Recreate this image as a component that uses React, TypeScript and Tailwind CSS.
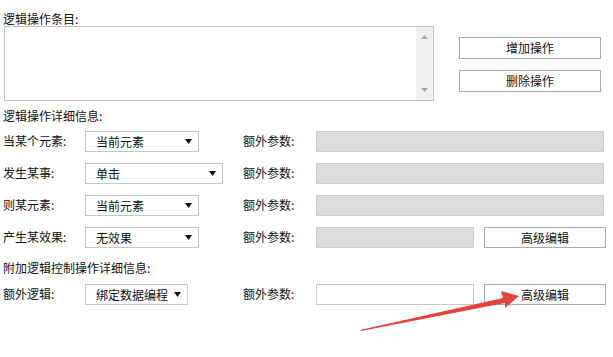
import React from "react";

const font = { fontFamily: '"Noto Sans CJK SC", "Liberation Sans", sans-serif' };

function Select({ value, width }: { value: string; width: string }) {
  return (
    <div className={`flex items-center justify-between h-[21px] border border-[#c6c6c6] bg-white pl-[10px] pr-[6px] ${width}`}>
      <span className="text-[12px] leading-none">{value}</span>
      <svg width="7" height="5" viewBox="0 0 7 5">
        <path d="M0 0 L7 0 L3.5 5 Z" fill="#111" />
      </svg>
    </div>
  );
}

function Button({ label, className = "" }: { label: string; className?: string }) {
  return (
    <div className={`flex items-center justify-center h-[21px] border border-[#a9a9a9] bg-white text-[12px] leading-none ${className}`}>
      {label}
    </div>
  );
}

function Row({
  label,
  value,
  selectWidth,
  extra,
}: {
  label: string;
  value: string;
  selectWidth: string;
  extra: React.ReactNode;
}) {
  return (
    <div className="flex items-center h-[21px]">
      <span className="w-[82px] text-[12px] leading-none -mt-[2px]">{label}</span>
      <div className="w-[158px]">
        <Select value={value} width={selectWidth} />
      </div>
      <span className="w-[73px] text-[12px] leading-none -mt-[2px]">额外参数:</span>
      {extra}
    </div>
  );
}

export default function App() {
  const grayFull = <div className="w-[288px] h-[21px] bg-[#dcdcdc] border border-[#cdcdcd]" />;

  return (
    <div className="relative w-[613px] h-[357px] bg-white text-[#111] overflow-hidden" style={font}>
      <div className="pl-[3px] pt-[12px]">
        <p className="text-[12px] leading-[14px]">逻辑操作条目:</p>

        {/* list + buttons */}
        <div className="flex mt-[0px]">
          <div className="flex ml-[1px] w-[430px] h-[75px] border border-[#c3c3c3] bg-white">
            <div className="flex-1" />
            <div className="w-[17px] bg-[#f0f0f0] flex flex-col items-center justify-between py-[8px]">
              <svg width="7" height="4" viewBox="0 0 7 4">
                <path d="M0 4 L7 4 L3.5 0 Z" fill="#a6a6a6" />
              </svg>
              <svg width="7" height="4" viewBox="0 0 7 4">
                <path d="M0 0 L7 0 L3.5 4 Z" fill="#a6a6a6" />
              </svg>
            </div>
          </div>
          <div className="flex flex-col gap-[11px] ml-[25px] pt-[11px]">
            <Button label="增加操作" className="w-[142px] h-[22px]" />
            <Button label="删除操作" className="w-[142px] h-[22px]" />
          </div>
        </div>

        <p className="text-[12px] leading-[14px] mt-[8px]">逻辑操作详细信息:</p>

        <div className="flex flex-col gap-[11px] mt-[8px]">
          <Row label="当某个元素:" value="当前元素" selectWidth="w-[114px]" extra={grayFull} />
          <Row label="发生某事:" value="单击" selectWidth="w-[138px]" extra={grayFull} />
          <Row label="则某元素:" value="当前元素" selectWidth="w-[114px]" extra={grayFull} />
          <Row
            label="产生某效果:"
            value="无效果"
            selectWidth="w-[114px]"
            extra={
              <div className="flex gap-[10px]">
                <div className="w-[158px] h-[21px] bg-[#dcdcdc] border border-[#cdcdcd]" />
                <Button label="高级编辑" className="w-[122px]" />
              </div>
            }
          />
        </div>

        <p className="text-[12px] leading-[14px] mt-[13px]">附加逻辑控制操作详细信息:</p>

        <div className="mt-[9px]">
          <Row
            label="额外逻辑:"
            value="绑定数据编程"
            selectWidth="w-[103px]"
            extra={
              <div className="flex gap-[10px]">
                <div className="w-[158px] h-[21px] bg-white border border-[#c6c6c6]" />
                <Button label="高级编辑" className="w-[122px]" />
              </div>
            }
          />
        </div>
      </div>

      {/* red annotation arrow */}
      <svg className="absolute left-0 top-0 pointer-events-none" width="613" height="357" viewBox="0 0 613 357">
        <polygon
          points="360,330 503,298 501,291 519,296 505,308 505,303 361,331"
          fill="#e2443c"
        />
      </svg>
    </div>
  );
}
